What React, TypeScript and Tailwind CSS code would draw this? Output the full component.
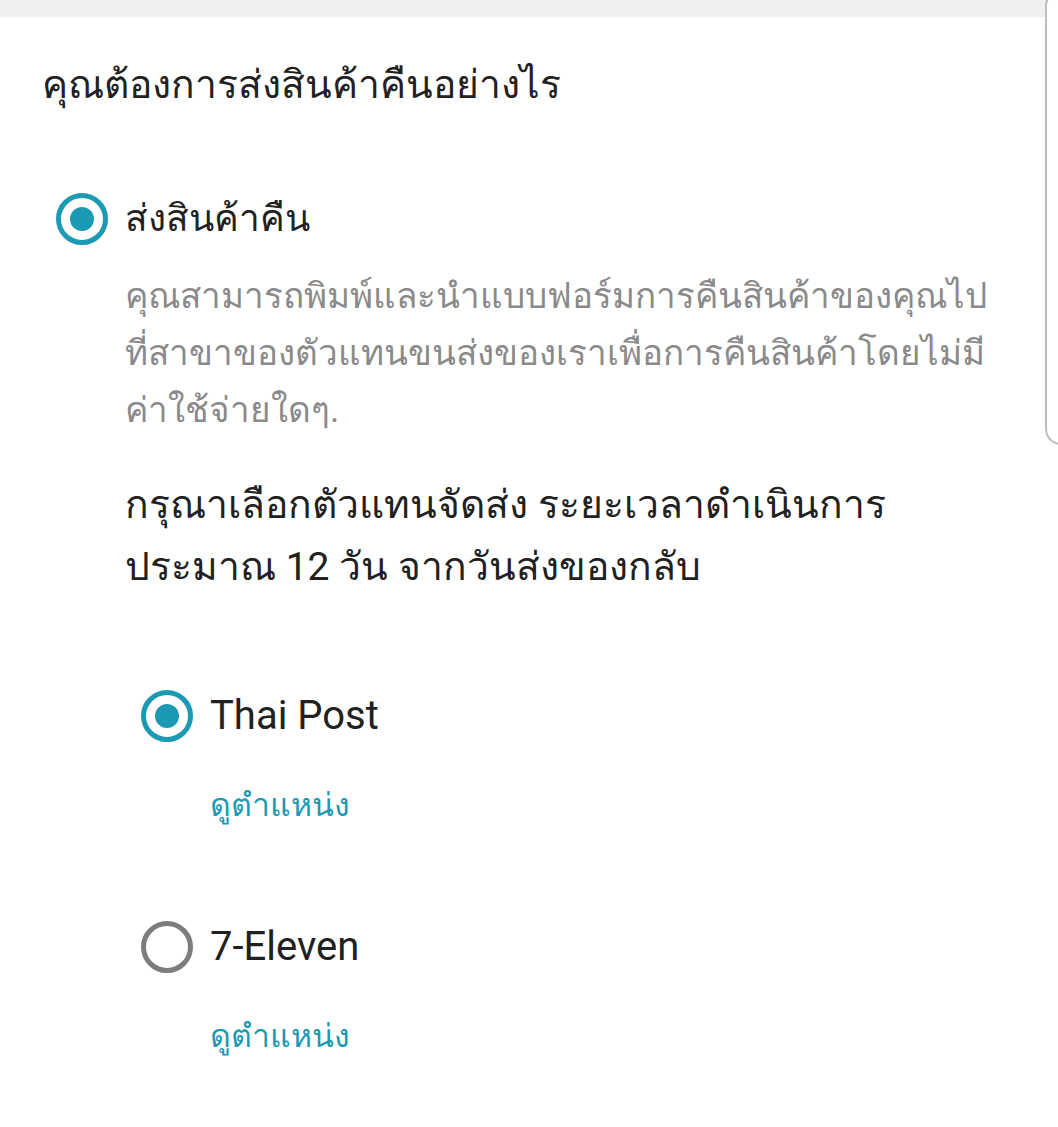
import React from 'react';

const Radio = ({ checked }: { checked: boolean }) => (
  <span
    className={`flex items-center justify-center w-[52px] h-[52px] rounded-full border-[5px] shrink-0 ${
      checked ? 'border-[#1c9ab3]' : 'border-[#7d7d7d]'
    }`}
  >
    {checked && <span className="w-[24px] h-[24px] rounded-full bg-[#1c9ab3]" />}
  </span>
);

const carriers = [
  { name: 'Thai Post', checked: true },
  { name: '7-Eleven', checked: false },
];

export default function App() {
  return (
    <div className="relative w-[1058px] h-[1127px] overflow-hidden bg-white font-['Roboto','Noto_Sans',sans-serif]">
      <div className="h-[17px] bg-[#f0f0f0]" />

      {/* scroll handle peeking from the right edge */}
      <div className="absolute right-[-20px] top-[-10px] w-[33px] h-[455px] rounded-[16px] border-2 border-[#bdbdbd] bg-white" />

      <div className="pl-[42px] pr-[40px]">
        <h1 className="pt-[43px] text-[39px] leading-[50px] text-[#212121] whitespace-nowrap">คุณต้องการส่งสินค้าคืนอย่างไร</h1>

        <div className="mt-[83px] flex items-center gap-[17px] pl-[14px]">
          <Radio checked />
          <span className="text-[37px] leading-[50px] font-medium text-[#212121]">ส่งสินค้าคืน</span>
        </div>

        <div className="pl-[83px]">
          <p className="mt-[23px] text-[35px] leading-[57px] text-[#8a8a8a] whitespace-nowrap">
            <span className="block">คุณสามารถพิมพ์และนำแบบฟอร์มการคืนสินค้าของคุณไป</span>
            <span className="block">ที่สาขาของตัวแทนขนส่งของเราเพื่อการคืนสินค้าโดยไม่มี</span>
            <span className="block">ค่าใช้จ่ายใดๆ.</span>
          </p>

          <p className="mt-[35px] text-[39px] leading-[62px] text-[#212121] whitespace-nowrap">
            <span className="block">กรุณาเลือกตัวแทนจัดส่ง ระยะเวลาดำเนินการ</span>
            <span className="block">ประมาณ 12 วัน จากวันส่งของกลับ</span>
          </p>

          <div className="mt-[92px] flex flex-col gap-[94px]">
            {carriers.map((c) => (
              <div key={c.name}>
                <div className="flex items-center gap-[17px] pl-[16px]">
                  <Radio checked={c.checked} />
                  <span className="text-[40px] leading-[52px] text-[#212121]">{c.name}</span>
                </div>
                <div className="mt-[41px] pl-[85px] text-[32px] leading-[44px] font-medium text-[#1c9ab3]">ดูตำแหน่ง</div>
              </div>
            ))}
          </div>
        </div>
      </div>
    </div>
  );
}
